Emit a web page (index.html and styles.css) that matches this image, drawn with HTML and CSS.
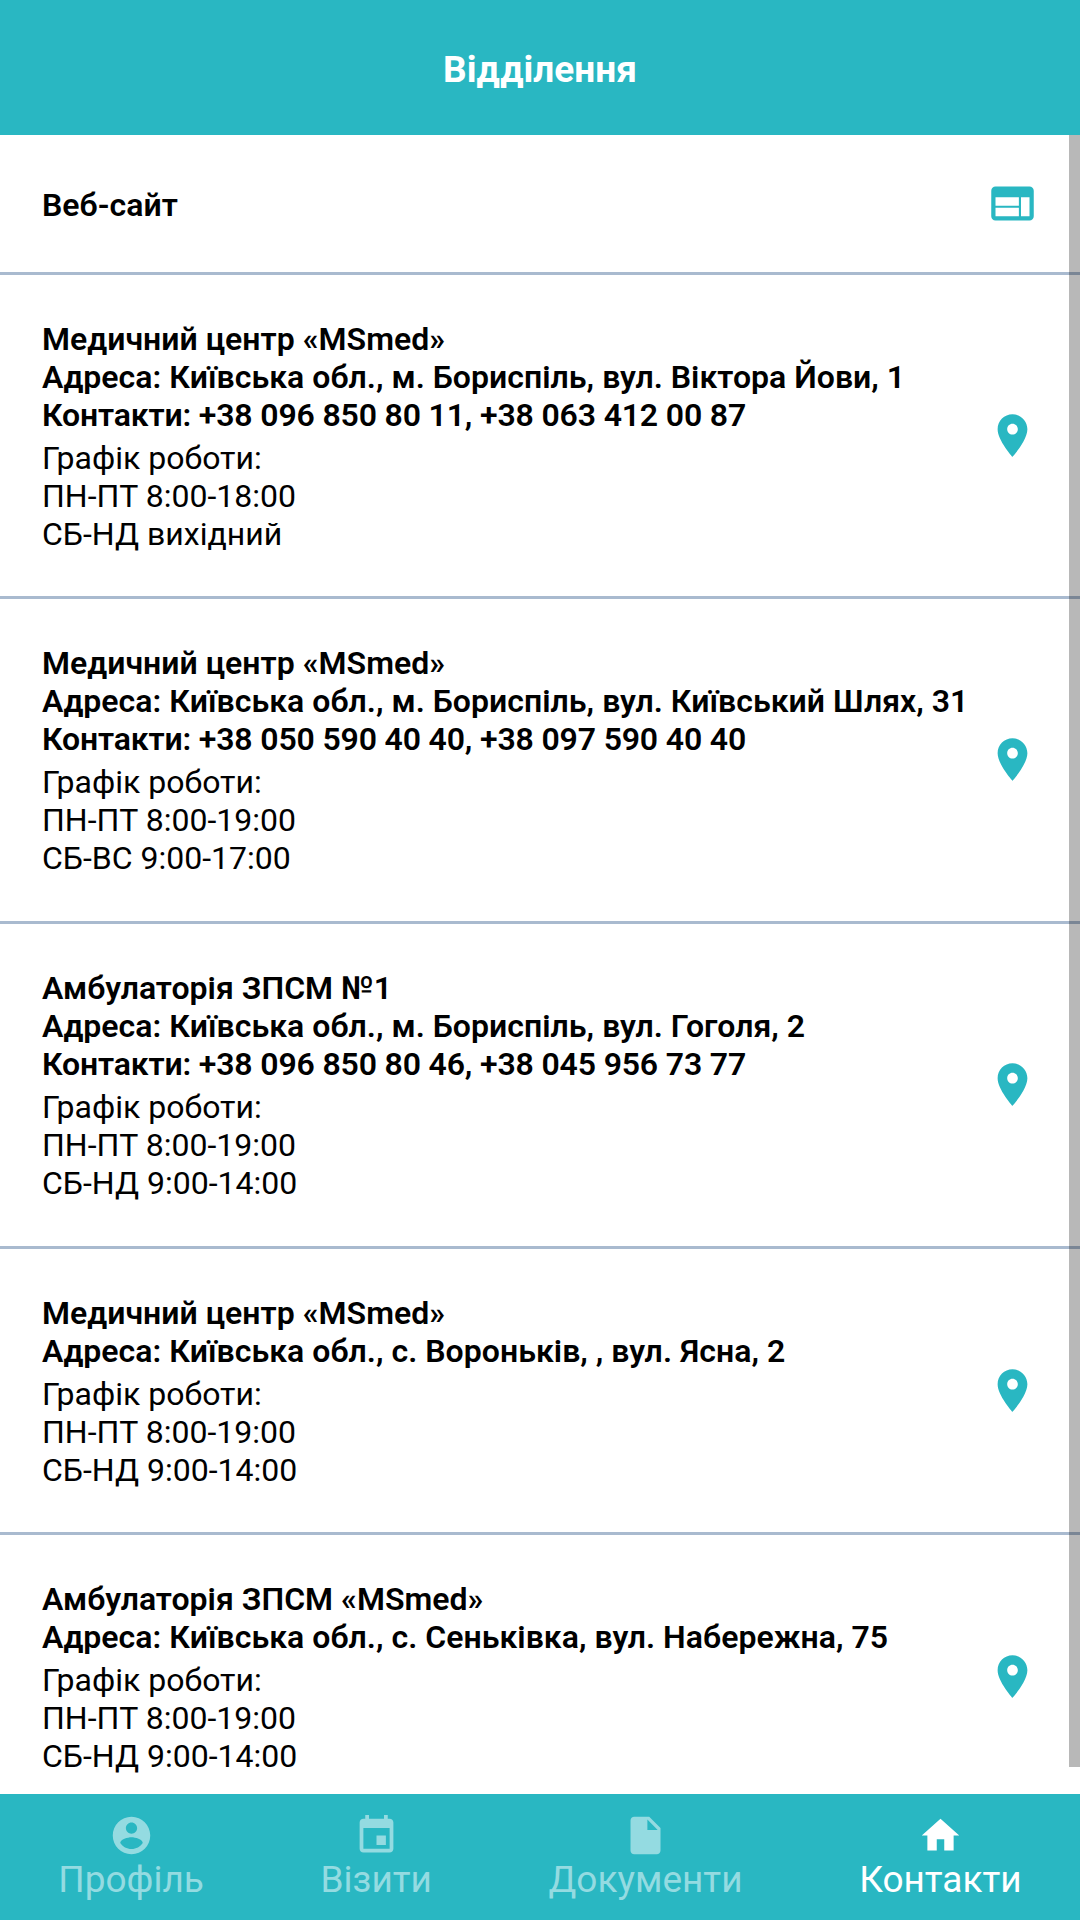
FILE: index.html
```html
<!DOCTYPE html>
<html lang="uk">

<head>
    <meta charset="UTF-8">
    <title>Відділення</title>
    <link rel="stylesheet" href="styles.css">
</head>

<body>
    <svg class="sprite">
        <symbol id="pin" viewBox="0 0 24 24">
            <path d="M12 2C8.13 2 5 5.13 5 9c0 5.25 7 13 7 13s7-7.75 7-13c0-3.87-3.13-7-7-7zm0 9.5c-1.38 0-2.5-1.12-2.5-2.5s1.12-2.5 2.5-2.5 2.5 1.12 2.5 2.5-1.12 2.5-2.5 2.5z"/>
        </symbol>
    </svg>

    <header class="header">
        <h1>Відділення</h1>
    </header>

    <main class="list">
        <div class="row row-site">
            <div class="info">
                <h2>Веб-сайт</h2>
            </div>
            <svg class="icon" viewBox="0 0 24 24">
                <path d="M20 4H4c-1.1 0-1.99.9-1.99 2L2 18c0 1.1.9 2 2 2h16c1.1 0 2-.9 2-2V6c0-1.1-.9-2-2-2zm-5 14H4v-4h11v4zm0-5H4V9h11v4zm5 5h-4V9h4v9z"/>
            </svg>
        </div>

        <div class="row">
            <div class="info">
                <h2>Медичний центр «MSmed»<br>Адреса: Київська обл., м. Бориспіль, вул. Віктора Йови, 1<br><span class="phones">Контакти: +38 096 850 80 11, +38 063 412 00 87</span></h2>
                <p>Графік роботи:<br>ПН-ПТ 8:00-18:00<br>СБ-НД вихідний</p>
            </div>
            <svg class="icon"><use href="#pin"/></svg>
        </div>

        <div class="row">
            <div class="info">
                <h2>Медичний центр «MSmed»<br>Адреса: Київська обл., м. Бориспіль, вул. Київський Шлях, 31<br><span class="phones">Контакти: +38 050 590 40 40, +38 097 590 40 40</span></h2>
                <p>Графік роботи:<br>ПН-ПТ 8:00-19:00<br>СБ-ВС 9:00-17:00</p>
            </div>
            <svg class="icon"><use href="#pin"/></svg>
        </div>

        <div class="row">
            <div class="info">
                <h2>Амбулаторія ЗПСМ №1<br>Адреса: Київська обл., м. Бориспіль, вул. Гоголя, 2<br><span class="phones">Контакти: +38 096 850 80 46, +38 045 956 73 77</span></h2>
                <p>Графік роботи:<br>ПН-ПТ 8:00-19:00<br>СБ-НД 9:00-14:00</p>
            </div>
            <svg class="icon"><use href="#pin"/></svg>
        </div>

        <div class="row">
            <div class="info">
                <h2>Медичний центр «MSmed»<br>Адреса: Київська обл., с. Вороньків, , вул. Ясна, 2</h2>
                <p>Графік роботи:<br>ПН-ПТ 8:00-19:00<br>СБ-НД 9:00-14:00</p>
            </div>
            <svg class="icon"><use href="#pin"/></svg>
        </div>

        <div class="row">
            <div class="info">
                <h2>Амбулаторія ЗПСМ «MSmed»<br>Адреса: Київська обл., с. Сеньківка, вул. Набережна, 75</h2>
                <p>Графік роботи:<br>ПН-ПТ 8:00-19:00<br>СБ-НД 9:00-14:00</p>
            </div>
            <svg class="icon"><use href="#pin"/></svg>
        </div>

        <div class="scrollbar"></div>
    </main>

    <nav class="tabs">
        <a class="tab">
            <svg class="tab-icon" viewBox="0 0 24 24">
                <path d="M12 2C6.48 2 2 6.48 2 12s4.48 10 10 10 10-4.48 10-10S17.52 2 12 2zm0 3c1.66 0 3 1.34 3 3s-1.34 3-3 3-3-1.34-3-3 1.34-3 3-3zm0 14.2c-2.5 0-4.71-1.28-6-3.22.03-1.99 4-3.08 6-3.08 1.99 0 5.97 1.09 6 3.08-1.29 1.94-3.5 3.22-6 3.22z"/>
            </svg>
            <span>Профіль</span>
        </a>
        <a class="tab">
            <svg class="tab-icon" viewBox="0 0 24 24">
                <path d="M17 12h-5v5h5v-5zM16 1v2H8V1H6v2H5c-1.11 0-1.99.9-1.99 2L3 19c0 1.1.89 2 2 2h14c1.1 0 2-.9 2-2V5c0-1.1-.9-2-2-2h-1V1h-2zm3 18H5V8h14v11z"/>
            </svg>
            <span>Візити</span>
        </a>
        <a class="tab">
            <svg class="tab-icon" viewBox="0 0 24 24">
                <path d="M6 2c-1.1 0-1.99.9-1.99 2L4 20c0 1.1.89 2 1.99 2H18c1.1 0 2-.9 2-2V8l-6-6H6zm7 7V3.5L18.5 9H13z"/>
            </svg>
            <span>Документи</span>
        </a>
        <a class="tab active">
            <svg class="tab-icon" viewBox="0 0 24 24">
                <path d="M10 20v-6h4v6h5v-8h3L12 3 2 12h3v8z"/>
            </svg>
            <span>Контакти</span>
        </a>
    </nav>
</body>

</html>
```

FILE: styles.css
```css
* {
    box-sizing: border-box;
}

body {
    margin: 0;
    height: 100vh;
    display: flex;
    flex-direction: column;
    overflow: hidden;
    background: #fff;
    color: #000;
    font-family: Roboto, "Liberation Sans", sans-serif;
}

h1,
h2,
p {
    margin: 0;
}

.sprite {
    display: none;
}

.header {
    flex: none;
    height: 135px;
    padding-top: 4px;
    display: flex;
    align-items: center;
    justify-content: center;
    background: #29b7c2;
    color: #fff;
}

.header h1 {
    font-size: 37px;
    font-weight: 700;
}

.list {
    flex: 1;
    min-height: 0;
    position: relative;
    overflow: hidden;
}

.row {
    display: flex;
    align-items: center;
    justify-content: space-between;
    padding: 45px 42px 43.6px;
    border-bottom: 3px solid #a9bacf;
}

.row-site {
    height: 139.8px;
    padding-top: 0;
    padding-bottom: 0;
}

.row-site .info {
    padding-top: 3px;
}

.row h2 {
    font-size: 32px;
    font-weight: 600;
    line-height: 38px;
    letter-spacing: 0.03px;
    white-space: nowrap;
}

.phones {
    letter-spacing: -0.16px;
}

.row p {
    margin-top: 5px;
    font-size: 32px;
    line-height: 38px;
}

.icon {
    flex: none;
    width: 51px;
    height: 51px;
    margin-bottom: 2px;
    fill: #29b7c2;
}

.row-site .icon {
    margin-bottom: 0;
}

.scrollbar {
    position: absolute;
    top: 0;
    right: 0;
    width: 11px;
    height: 1632px;
    background: rgba(0, 0, 0, 0.28);
}

.tabs {
    flex: none;
    height: 126px;
    padding-top: 19px;
    display: flex;
    justify-content: space-around;
    background: #29b7c2;
}

.tab {
    display: flex;
    flex-direction: column;
    align-items: center;
    color: #94dbe1;
    font-size: 37px;
    line-height: 44px;
}

.tab-icon {
    width: 45px;
    height: 45px;
    fill: currentColor;
}

.active {
    color: #fff;
}
```
